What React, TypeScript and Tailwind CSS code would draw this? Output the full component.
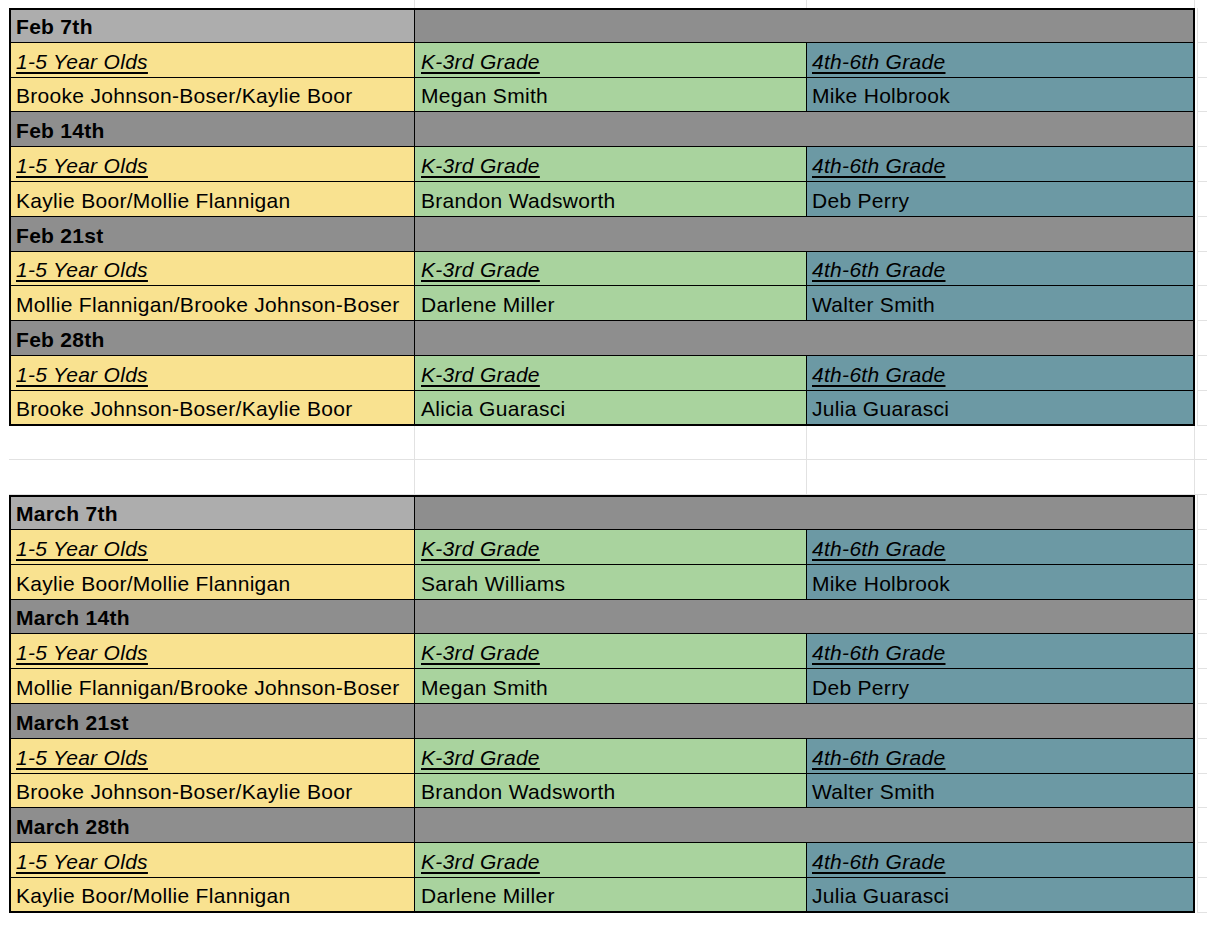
import React from 'react';

// 每周的值班安排
interface Week {
  date: string;
  first: boolean;
  toddlers: string;
  k3: string;
  upper: string;
}

const febWeeks: Week[] = [
  { date: 'Feb 7th', first: true, toddlers: 'Brooke Johnson-Boser/Kaylie Boor', k3: 'Megan Smith', upper: 'Mike Holbrook' },
  { date: 'Feb 14th', first: false, toddlers: 'Kaylie Boor/Mollie Flannigan', k3: 'Brandon Wadsworth', upper: 'Deb Perry' },
  { date: 'Feb 21st', first: false, toddlers: 'Mollie Flannigan/Brooke Johnson-Boser', k3: 'Darlene Miller', upper: 'Walter Smith' },
  { date: 'Feb 28th', first: false, toddlers: 'Brooke Johnson-Boser/Kaylie Boor', k3: 'Alicia Guarasci', upper: 'Julia Guarasci' },
];

const marchWeeks: Week[] = [
  { date: 'March 7th', first: true, toddlers: 'Kaylie Boor/Mollie Flannigan', k3: 'Sarah Williams', upper: 'Mike Holbrook' },
  { date: 'March 14th', first: false, toddlers: 'Mollie Flannigan/Brooke Johnson-Boser', k3: 'Megan Smith', upper: 'Deb Perry' },
  { date: 'March 21st', first: false, toddlers: 'Brooke Johnson-Boser/Kaylie Boor', k3: 'Brandon Wadsworth', upper: 'Walter Smith' },
  { date: 'March 28th', first: false, toddlers: 'Kaylie Boor/Mollie Flannigan', k3: 'Darlene Miller', upper: 'Julia Guarasci' },
];

const cell = 'flex items-end pb-[4px] leading-[23px] whitespace-nowrap overflow-hidden border-b border-black';

function Tail() {
  return <div className="flex-1 h-full border-b border-[#e2e2e2] border-l border-l-[#e2e2e2] ml-[2px]" />;
}

function DateRow({ week, top }: { week: Week; top: boolean }) {
  const t = top ? 'border-t-2' : '';
  return (
    <div className="flex h-[34.8px]">
      <div className={`${cell} ${t} w-[406px] border-l-2 border-r pl-[5px] font-bold ${week.first ? 'bg-[#adadad]' : 'bg-[#8e8e8e]'}`}>
        {week.date}
      </div>
      <div className={`${cell} ${t} w-[780px] border-r-2 bg-[#8e8e8e]`} />
      <Tail />
    </div>
  );
}

function Row({ a, b, c, header, last }: { a: string; b: string; c: string; header?: boolean; last?: boolean }) {
  const txt = header ? 'italic underline underline-offset-[3px]' : '';
  const bb = last ? 'border-b-2' : '';
  return (
    <div className="flex h-[34.8px]">
      <div className={`${cell} ${bb} w-[406px] border-l-2 border-r pl-[5px] bg-[#f9e290]`}>
        <span className={txt}>{a}</span>
      </div>
      <div className={`${cell} ${bb} w-[392px] border-r pl-[6px] bg-[#a9d39e]`}>
        <span className={txt}>{b}</span>
      </div>
      <div className={`${cell} ${bb} w-[388px] border-r-2 pl-[5px] bg-[#6c99a4]`}>
        <span className={txt}>{c}</span>
      </div>
      <Tail />
    </div>
  );
}

function Block({ weeks }: { weeks: Week[] }) {
  return (
    <div>
      {weeks.map((w, i) => (
        <div key={w.date}>
          <DateRow week={w} top={i === 0} />
          <Row a="1-5 Year Olds" b="K-3rd Grade" c="4th-6th Grade" header />
          <Row a={w.toddlers} b={w.k3} c={w.upper} last={i === weeks.length - 1} />
        </div>
      ))}
    </div>
  );
}

function EmptyRow() {
  return (
    <div className="flex h-[34.8px]">
      <div className="w-[406px] h-full border-b border-[#e2e2e2] border-r border-r-[#e2e2e2]" />
      <div className="w-[392px] h-full border-b border-[#e2e2e2] border-r border-r-[#e2e2e2]" />
      <div className="w-[388px] h-full border-b border-[#e2e2e2] border-r border-r-[#e2e2e2]" />
      <div className="flex-1 h-full border-b border-[#e2e2e2]" />
    </div>
  );
}

export default function App() {
  return (
    <div className="w-[1207px] h-[926px] bg-white text-black text-[21px] tracking-[0.3px] overflow-hidden font-['Liberation_Sans',Arial,sans-serif]">
      <div className="flex h-[8px] pl-[9px]">
        <div className="w-[406px] border-r border-[#e2e2e2]" />
        <div className="w-[392px] border-r border-[#e2e2e2]" />
        <div className="w-[388px] border-r border-[#e2e2e2]" />
      </div>
      <div className="pl-[9px]">
        <Block weeks={febWeeks} />
        <EmptyRow />
        <EmptyRow />
        <Block weeks={marchWeeks} />
      </div>
    </div>
  );
}
